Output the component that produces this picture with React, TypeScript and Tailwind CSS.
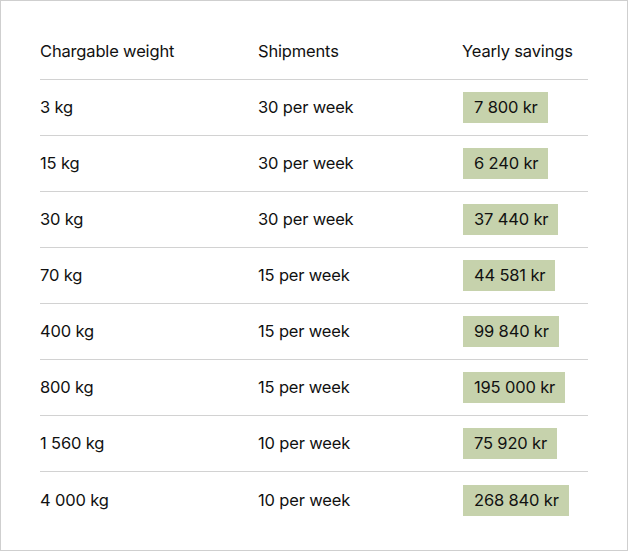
import React from "react";

const rows: [string, string, string][] = [
  ["3 kg", "30 per week", "7 800 kr"],
  ["15 kg", "30 per week", "6 240 kr"],
  ["30 kg", "30 per week", "37 440 kr"],
  ["70 kg", "15 per week", "44 581 kr"],
  ["400 kg", "15 per week", "99 840 kr"],
  ["800 kg", "15 per week", "195 000 kr"],
  ["1 560 kg", "10 per week", "75 920 kr"],
  ["4 000 kg", "10 per week", "268 840 kr"],
];

export default function App() {
  return (
    <div
      className="w-[628px] h-[551px] bg-white border border-[#cfcfcf] text-[#111111] text-[16.5px] tracking-[-0.01em]"
      style={{ fontFamily: "Inter, 'Liberation Sans', sans-serif" }}
    >
      <div className="pt-[23px] px-[39px]">
        <div className="grid grid-cols-[218px_204px_126px] h-[56px] items-center border-b border-[#d2d2d2]">
          <div>Chargable weight</div>
          <div>Shipments</div>
          <div>Yearly savings</div>
        </div>
        {rows.map((r, i) => (
          <div
            key={i}
            className={
              "grid grid-cols-[218px_204px_126px] h-[56px] items-center " +
              (i < rows.length - 1 ? "border-b border-[#d2d2d2]" : "")
            }
          >
            <div>{r[0]}</div>
            <div>{r[1]}</div>
            <div>
              <span className="inline-flex h-[31px] items-center pl-[11px] pr-[10px] ml-[1px] bg-[#c6d2ac]">
                {r[2]}
              </span>
            </div>
          </div>
        ))}
      </div>
    </div>
  );
}
